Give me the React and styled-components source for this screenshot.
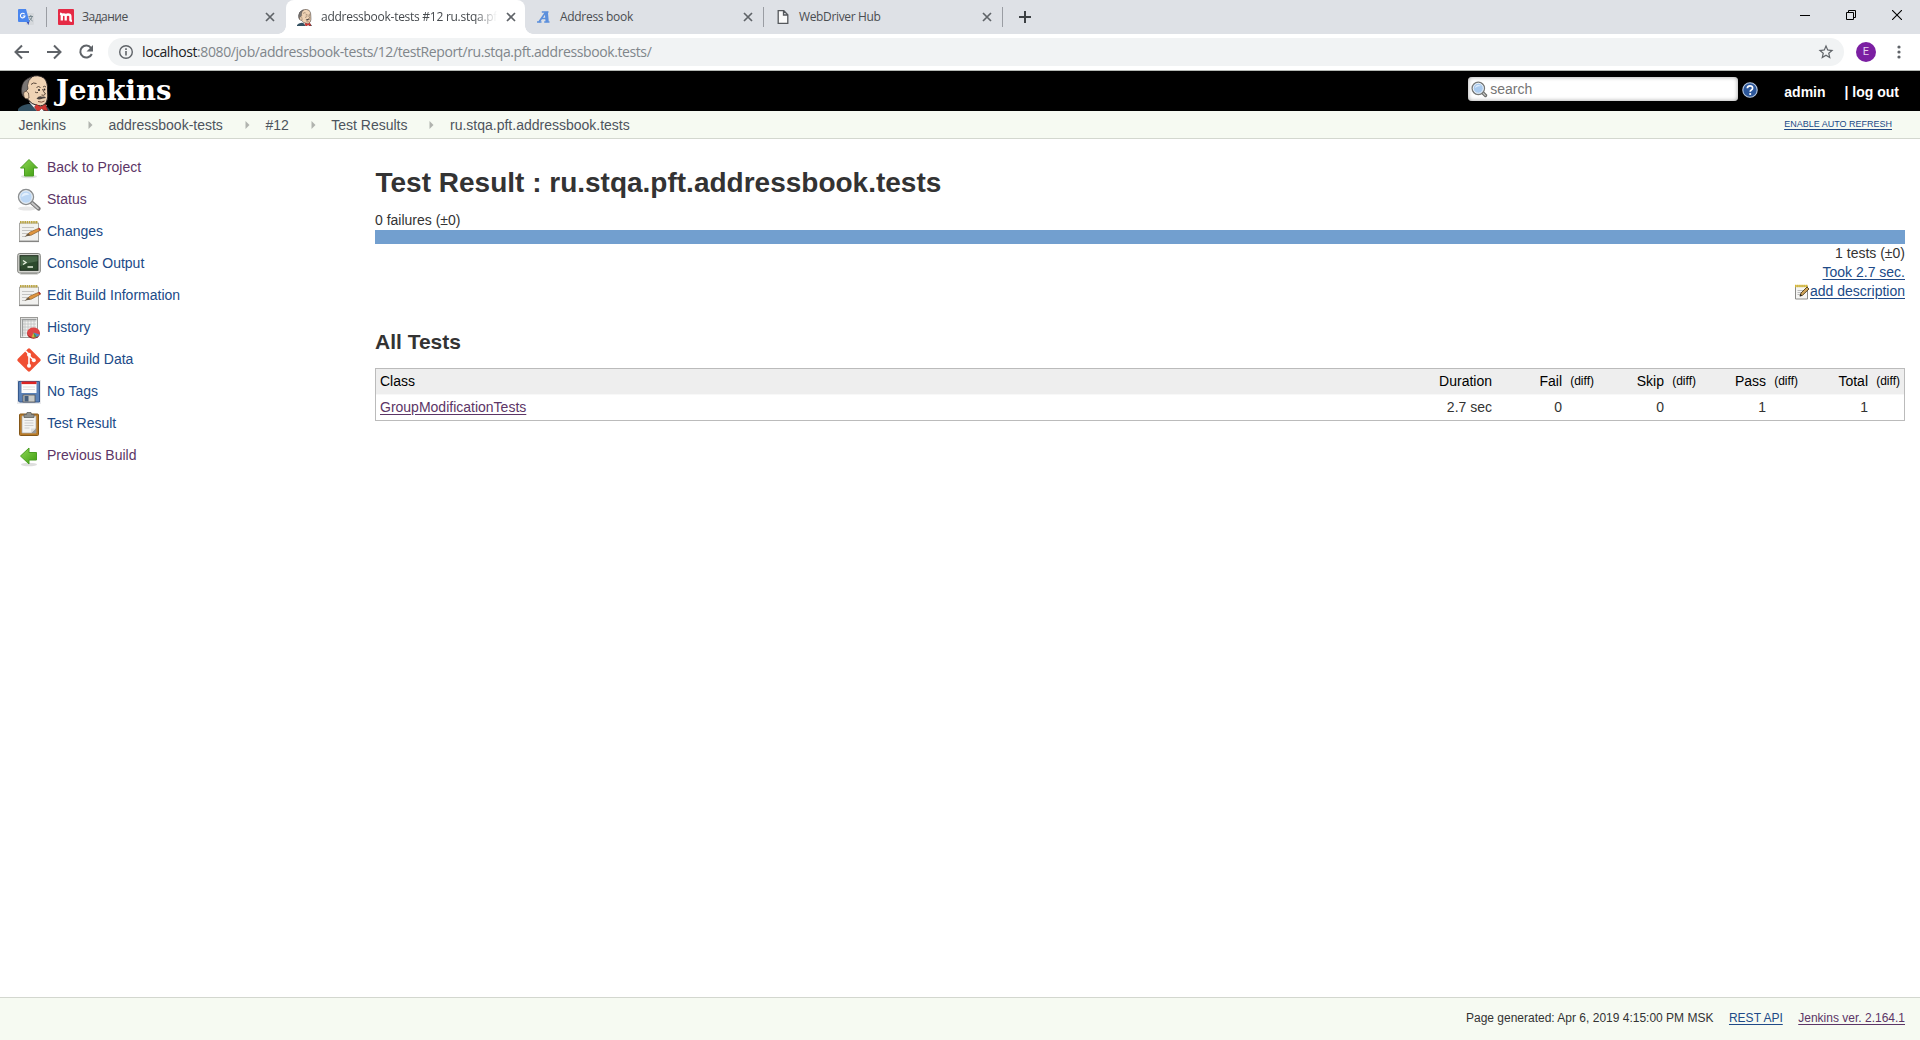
import React from 'react';
import styled, { createGlobalStyle, css } from 'styled-components';

const GlobalStyle = createGlobalStyle`
  * { box-sizing: border-box; }
  html, body { margin: 0; padding: 0; background: #fff; }
  body {
    font: 14px/19px "Liberation Sans", Arial, sans-serif;
    color: #333;
    overflow: hidden;
  }
  svg { display: block; flex: none; }
`;

const chromeFont = css`
  font-family: "Open Sans", "Noto Sans", sans-serif;
`;

const Page = styled.div`
  display: flex;
  flex-direction: column;
  width: 1920px;
  height: 1040px;
`;

/* ---------- browser window ---------- */

const TabStrip = styled.div`
  ${chromeFont}
  display: flex;
  height: 34px;
  flex: none;
  background: #dee1e6;
`;

const PinnedTab = styled.div`
  display: flex;
  align-items: center;
  width: 46px;
  padding-left: 18px;
`;

const Tab = styled.div`
  position: relative;
  display: flex;
  align-items: center;
  width: ${(p) => p.$width}px;
  padding: 0 10px 0 11px;
  background: ${(p) => (p.$active ? '#fff' : 'transparent')};
  border-radius: 8px 8px 0 0;
  color: ${(p) => (p.$active ? '#45494d' : '#4a4d51')};
  ${(p) =>
    p.$active &&
    css`
      &::before,
      &::after {
        content: '';
        position: absolute;
        bottom: 0;
        width: 8px;
        height: 8px;
      }
      &::before {
        left: -8px;
        background: radial-gradient(circle at 0 0, transparent 7.5px, #fff 8px);
      }
      &::after {
        right: -8px;
        background: radial-gradient(circle at 100% 0, transparent 7.5px, #fff 8px);
      }
    `}
`;

const TabTitle = styled.div`
  flex: 1;
  margin: 0 8px;
  white-space: nowrap;
  font-size: 12px;
  line-height: 18px;
  letter-spacing: ${(p) => p.$spacing || 0}px;
  ${(p) => p.$fade && css`
    margin: 0 8px 0 9px;
    mask-image: linear-gradient(90deg, #000 87%, transparent);
  `}
`;

const TabDivider = styled.div`
  width: 1px;
  height: 20px;
  margin: 7px 0 0 ${(p) => (p.$flush ? 0 : -1)}px;
  background: #9a9da3;
`;

const NewTab = styled.div`
  display: flex;
  align-items: center;
  padding-left: 16px;
`;

const WindowButtons = styled.div`
  display: flex;
  width: 138px;
  height: 29px;
  margin-left: auto;
`;

const WindowButton = styled.div`
  display: flex;
  align-items: center;
  justify-content: center;
  width: 46px;
`;

const Toolbar = styled.div`
  ${chromeFont}
  display: flex;
  align-items: center;
  height: 37px;
  flex: none;
  padding: 0 13px 1px 12px;
  border-bottom: 1px solid #b4b8b3;
  background: #fff;
`;

const NavButtons = styled.div`
  display: flex;
  gap: 12px;
  width: 96px;
`;

const Omnibox = styled.div`
  display: flex;
  align-items: center;
  flex: 1;
  height: 28px;
  padding: 0 9px 0 10px;
  border-radius: 14px;
  background: #f1f3f4;
`;

const Url = styled.div`
  flex: 1;
  margin-left: 8px;
  font-size: 14px;
  line-height: 20px;
  letter-spacing: -0.4px;
  color: #80868b;
  white-space: nowrap;
  b { font-weight: 400; color: #202124; }
`;

const Avatar = styled.div`
  width: 20px;
  height: 20px;
  margin: 0 15px 0 12px;
  border-radius: 50%;
  background: #7b1fa2;
  color: #e7d3ee;
  font: 11px/20px Roboto, sans-serif;
  text-align: center;
`;

/* ---------- Jenkins ---------- */

const Header = styled.header`
  display: flex;
  height: 40px;
  flex: none;
  padding: 0 21px 0 18px;
  background: #000;
  color: #fff;
`;

const Logo = styled.div`
  display: flex;
  align-items: flex-end;
  gap: 6px;
`;

const LogoText = styled.div`
  height: 40px;
  font: bold 27.5px/38px "DejaVu Serif", serif;
`;

const SearchBox = styled.div`
  display: flex;
  align-items: center;
  gap: 2px;
  width: 270px;
  height: 24px;
  margin: 6px 4px 0 auto;
  padding-left: 3px;
  border-radius: 4px;
  background: #fff;
  box-shadow: inset 0 0 4px #999;
  color: #757575;
`;

const HelpIcon = styled.div`
  width: 16px;
  margin: 11px 26px 0 0;
`;

const UserLink = styled.div`
  margin-left: ${(p) => p.$gap || 0}px;
  line-height: 43px;
  font-weight: bold;
  white-space: pre;
`;

const BreadcrumbBar = styled.nav`
  display: flex;
  align-items: center;
  height: 28px;
  flex: none;
  padding: 1px 28px 0 18.5px;
  border-bottom: 1px solid #d3d7cf;
  background: #f6faf2;
  color: #4d545d;
`;

const CrumbArrow = styled.div`
  width: 42.5px;
  display: flex;
  padding-left: 22px;
`;

const AutoRefresh = styled.a`
  margin: -2px 0 0 auto;
  font-size: 9px;
  line-height: 12px;
  color: #204a87;
  text-decoration: underline;
  text-underline-offset: 1.5px;
`;

const Body = styled.div`
  display: flex;
  flex: 1;
`;

const SidePanel = styled.aside`
  width: 375px;
  padding: 12px 0 0 17px;
`;

const Task = styled.a`
  display: flex;
  align-items: center;
  gap: 6px;
  height: 32px;
  color: ${(p) => (p.$visited ? '#5c3566' : '#204a87')};
  svg { margin-top: 2px; }
`;

const MainPanel = styled.main`
  width: 1530px;
`;

const Title = styled.h1`
  margin: 27px 0 11px;
  font-size: 28px;
  line-height: 34px;
  text-indent: 0.5px;
`;

const Subtitle = styled.h2`
  margin: 29px 0 14px;
  font-size: 21px;
  line-height: 24px;
`;

const Failures = styled.div`
  height: 19px;
`;

const ResultBar = styled.div`
  height: 14px;
  background: #729fcf;
`;

const Summary = styled.div`
  display: flex;
  flex-direction: column;
  align-items: flex-end;
`;

const Link = styled.a`
  color: ${(p) => (p.$visited ? '#5c3566' : '#204a87')};
  text-decoration: underline;
  text-underline-offset: 2px;
`;

const Description = styled.div`
  display: flex;
  align-items: center;
`;

const Table = styled.div`
  display: flex;
  flex-direction: column;
  border: 1px solid #bbb;
`;

const Row = styled.div`
  display: grid;
  grid-template-columns: 1fr 90px repeat(4, 102px);
  height: ${(p) => (p.$head ? 26 : 25)}px;
  line-height: 25px;
  background: ${(p) => (p.$head ? '#eee' : '#fff')};
  color: ${(p) => (p.$head ? '#000' : '#333')};
  border-bottom: ${(p) => (p.$head ? '1px solid #f8f8f8' : '0')};
`;

const ClassCell = styled.div`
  padding-left: 4px;
`;

const DurationCell = styled.div`
  padding-right: 4px;
  text-align: right;
`;

const CountCell = styled.div`
  display: grid;
  grid-template-columns: 1fr 36px;
  text-align: right;
`;

const Diff = styled.span`
  padding-right: 4px;
  font-size: 12px;
`;

const Footer = styled.footer`
  display: flex;
  justify-content: flex-end;
  gap: 15.5px;
  height: 43px;
  flex: none;
  padding: 11px 15px 0;
  border-top: 1px solid #d3d7cf;
  background: #f6faf2;
  font-size: 12px;
  line-height: 18px;
`;

/* ---------- drawings ---------- */

const Stroke = ({ size = 16, d, w = 2, color = '#5f6368', box = 16 }) => (
  <svg width={size} height={size} viewBox={`0 0 ${box} ${box}`} fill="none" stroke={color} strokeWidth={w}>
    <path d={d} />
  </svg>
);

const TabClose = () => <Stroke size={12} box={12} w={1.7} d="M2 2l8 8M10 2l-8 8" />;

const TranslateIcon = () => (
  <svg width="16" height="16" viewBox="0 0 16 16">
    <path d="M6 4h9a1 1 0 011 1v10a1 1 0 01-1 1H8z" fill="#d5d8dc" />
    <path d="M8 12l2.500 4 1-4z" fill="#3a4fb5" />
    <path d="M1 0h7l3.500 13H1a1 1 0 01-1-1V1a1 1 0 011-1z" fill="#4a86ee" />
    <path d="M6.600 5.200A2.300 2.300 0 107 7H4.800" fill="none" stroke="#fff" strokeWidth="1.100" />
    <path d="M10.500 7.500H15M12.800 6v1.500M11 12c1.500-1 2.700-2.500 3-4.500M11.600 8.500c.5 1.500 1.500 2.500 3 3.500" fill="none" stroke="#7a8a91" strokeWidth="1" />
  </svg>
);

const MIcon = () => (
  <svg width="16" height="16" viewBox="0 0 16 16">
    <rect width="16" height="16" rx="1" fill="#e52a45" />
    <path d="M2 4.600q1.800.2 1.800 2.400v4.500M3.800 7.500q.2-2 2-2 1.900 0 1.900 2v4M7.700 7.500q.2-2 2.300-2 2.400 0 2.400 2v4q0 .3 1.600.3" fill="none" stroke="#fff" strokeWidth="2.300" />
  </svg>
);

const AIcon = () => (
  <svg width="16" height="16" viewBox="0 0 16 16" fill="none" stroke="#5b8fdc">
    <path d="M3 13L9.500 3.500" strokeWidth="1.700" />
    <path d="M10.300 3L11.200 13" strokeWidth="3.200" />
    <path d="M1 13h4.500M8.200 13h5.300M5.800 3h6.700M6 9.500h4" strokeWidth="1.600" />
  </svg>
);

const PageIcon = () => (
  <svg width="16" height="16" viewBox="0 0 16 16" fill="#fafafa" stroke="#55585c" strokeWidth="1.300">
    <path d="M3.200 1.700h5.600l4 4v8.600H3.200zM8.500 2v4h4" />
  </svg>
);

const Butler = ({ width, height }) => (
  <svg width={width} height={height} viewBox="0 0 32 36" preserveAspectRatio="none">
    <path d="M0 36V34q3-4 10-5l15 1q6 2 7 6z" fill="#335061" />
    <path d="M11 27l8 9h6l4-6z" fill="#f4f4f4" />
    <path d="M4 13Q5 5 13 2 20-1 26 3q4 4 3.500 12 1 8-1 12-3 5-9 3.500-6-1-9.500-6Q3 23 4 13z" fill="#efd3b4" stroke="#231f20" strokeWidth="1" />
    <path d="M3.500 14Q4 6 10 3.500 12 2 14 2 10 5 9.500 10.500L10 14 8 16 6 22Q3 20 3.500 14z" fill="#797573" stroke="#231f20" strokeWidth=".6" />
    <path d="M6 17q2.500-2 4.500 1l.5 5q-4 2-5-1.500-.8-2.500 0-4.500z" fill="#efd3b4" stroke="#4d3b2e" strokeWidth=".7" />
    <path d="M13 9.500Q15 7 18.500 8.500M18.500 12.500q2-2 4 0M25 12q1.500-1.500 3 0M24.500 14q1 3 3 5-1.500 2-4 1M17 17q1.500 1 3 .5" fill="none" stroke="#4a382c" strokeWidth=".9" />
    <circle cx="21" cy="15" r="1" fill="#231f20" />
    <circle cx="26.500" cy="14.500" r=".9" fill="#231f20" />
    <path d="M18.500 23.500q3-3.500 5.500-1.800 3-.7 4 1.300-4 .6-4.500 1-3 1-5-.5z" fill="#4c433f" />
    <path d="M20 26.500q4 1.500 6.500-.5" fill="none" stroke="#7d4c3a" strokeWidth="1" />
    <path d="M19 36l-2.500-4 2-2.500 4.500 2.300 4.500-2.600L30 36l-4.500-1-2-1.500L21 36z" fill="#d33833" stroke="#731d18" strokeWidth=".5" />
  </svg>
);

const Magnifier = ({ size }) => (
  <svg width={size} height={size} viewBox="0 0 24 24">
    <ellipse cx="10" cy="20.500" rx="9" ry="2" fill="#e6e6e6" />
    <path d="M14 14l7.500 6.500" stroke="#777" strokeWidth="4.200" strokeLinecap="round" />
    <path d="M15 15l6 5.300" stroke="#c8c8c8" strokeWidth="1.800" strokeLinecap="round" />
    <circle cx="9" cy="9" r="7.300" fill="#bcd7f5" stroke="#8c8f91" strokeWidth="1.800" />
    <circle cx="9" cy="9" r="6.300" fill="none" stroke="#f3f6f8" strokeWidth="1" />
    <path d="M4.500 9a4.500 4.500 0 018-2.500q-4 0-8 2.500z" fill="#e3effc" />
  </svg>
);

const SearchIcon = () => (
  <svg width="17" height="17" viewBox="0 0 17 17">
    <path d="M11.500 11.500l3 3" stroke="#6d6e6c" strokeWidth="3.400" strokeLinecap="round" />
    <path d="M12 12l2.300 2.300" stroke="#c9cac8" strokeWidth="1.200" strokeLinecap="round" />
    <circle cx="7.300" cy="7.300" r="6.200" fill="#a9caee" stroke="#777876" strokeWidth="1.300" />
    <circle cx="7.300" cy="7.300" r="5" fill="none" stroke="#eef2f5" strokeWidth="1" />
    <path d="M4 7a3.500 3.500 0 016-2q-3.500 0-6 2z" fill="#dcebfb" />
  </svg>
);

const ArrowIcon = ({ left }) => (
  <svg width="24" height="24" viewBox="0 0 24 24">
    <defs>
      <linearGradient id="leaf" x1="0" y1="0" x2="1" y2="1">
        <stop offset="0" stopColor="#8fd956" />
        <stop offset="1" stopColor="#3f9c10" />
      </linearGradient>
    </defs>
    <ellipse cx="12" cy="20.500" rx="8" ry="1.800" fill="#dedede" />
    <path
      d={left ? 'M3.500 12L12 4v4.500h7.500v7.500H12V20z' : 'M12 3.500L20.500 12H16.500v8h-9v-8H3.500z'}
      fill="url(#leaf)"
      stroke="#4a9e22"
      strokeWidth="1"
      strokeLinejoin="round"
    />
  </svg>
);

const Notepad = ({ size = 24 }) => (
  <svg width={size} height={size} viewBox="0 0 24 24">
    <path d="M2.500 3h19v18h-19z" fill="#f1f1ef" stroke="#a8a8a5" />
    <path d="M2 21.500h20" stroke="#858583" strokeWidth="1.200" />
    <path d="M3 2.300h18" stroke="#bba544" strokeWidth="2.600" strokeDasharray="1.600 .6" />
    <path d="M5 7.500h12M5 10.500h10M5 13.500h6M5 16.500h4" stroke="#c4c4c2" />
    <path d="M9.500 15l4-3.200L22 8.200l1.500 2L14 15.300z" fill="#e0953f" stroke="#8a5f2a" strokeWidth=".7" />
    <path d="M7.500 16.700l4.200-3.400 1.500 2.200z" fill="#6a5a45" />
    <path d="M21.800 8.300l1.500 1.900" stroke="#b3323a" strokeWidth="1.500" />
  </svg>
);

const SmallNotepad = () => (
  <svg width="16" height="16" viewBox="0 0 16 16">
    <path d="M1.500 2h12v13h-12z" fill="#f5f5f3" stroke="#8b8b88" />
    <path d="M1 2h13" stroke="#dab92a" strokeWidth="2.500" strokeDasharray="1.500 .6" />
    <path d="M3.500 6.500h7M3.500 8.500h5M3.500 10.500h3" stroke="#bbb" />
    <path d="M6 12l1-3 6-6 2 2-6.500 6.300z" fill="#cfa45a" stroke="#4f3c1b" strokeWidth=".9" />
    <path d="M5.600 12.500l1-2.500 1.500 1.500z" fill="#222" />
  </svg>
);

const Terminal = () => (
  <svg width="24" height="24" viewBox="0 0 24 24">
    <path d="M5 20h14l2 2.500H3z" fill="#b4b5b0" />
    <rect x=".7" y="1.500" width="22.600" height="19.500" rx="2" fill="#d5d6d1" stroke="#7f807c" />
    <rect x="3" y="3.700" width="18" height="14.600" fill="#2c4a2c" stroke="#1d2b1d" />
    <path d="M3.500 4.200h17v5q-9 1-17 5z" fill="#466646" />
    <path d="M6 8.500l3 2-3 2M10.500 15h5.500" fill="none" stroke="#e8f2e0" strokeWidth="1.300" />
  </svg>
);

const HistoryIcon = () => (
  <svg width="24" height="24" viewBox="0 0 24 24">
    <rect x="3.500" y="1.500" width="17" height="20" fill="#f2f2f0" stroke="#9b9b98" />
    <path d="M5 5h14M5 8h14M5 11h14M5 14h14M5 17h14M8 3v17M11 3v17M14 3v17M17 3v17" stroke="#bfc1c1" strokeWidth=".8" />
    <path d="M5.500 3.500v17M4.500 3.500h15" stroke="#9a9d9d" strokeWidth="1.400" />
    <ellipse cx="16.500" cy="17.700" rx="6.300" ry="5" fill="#a01b1b" />
    <ellipse cx="16.500" cy="16.500" rx="6.300" ry="5" fill="#df4545" />
    <path d="M16.500 16.500l-2 5h4z" fill="#ccb13c" />
    <path d="M16.500 16.500l1.500 5q4-1 4.500-3z" fill="#538bc5" />
    <path d="M16.500 16.500l1 5 2-1z" fill="#579431" />
  </svg>
);

const GitIcon = () => (
  <svg width="24" height="24" viewBox="0 0 24 24">
    <path d="M10.700.9Q12-.3 13.300.9l9.800 9.800q1.200 1.300 0 2.600l-9.800 9.800q-1.300 1.200-2.600 0L.9 13.300q-1.200-1.300 0-2.600z" fill="#f05033" />
    <path d="M8.500 2.800l3.500 3.500v12M12 7.500l4.500 4.500" fill="none" stroke="#fff" strokeWidth="1.600" />
    <circle cx="12" cy="6.800" r="2" fill="#fff" />
    <circle cx="12" cy="17.800" r="2" fill="#fff" />
    <circle cx="16.800" cy="12.200" r="2" fill="#fff" />
  </svg>
);

const Floppy = () => (
  <svg width="24" height="24" viewBox="0 0 24 24">
    <rect width="24" height="24" fill="#e9eaec" />
    <path d="M1.500 1.500h21v20.500h-20l-1-1z" fill="#5b82b8" stroke="#36588c" />
    <rect x="4.500" y="2" width="15" height="11" fill="#fcfcfc" />
    <rect x="4.500" y="1.500" width="15" height="2.600" fill="#dd2525" />
    <path d="M6 7h12M6 9.500h12" stroke="#d5d5d5" strokeWidth=".8" />
    <rect x="6" y="15" width="12" height="7" fill="#c8cac7" stroke="#555" strokeWidth=".8" />
    <rect x="7.500" y="16" width="4" height="5.500" fill="#455e7d" />
  </svg>
);

const Clipboard = () => (
  <svg width="24" height="24" viewBox="0 0 24 24">
    <rect x="2.500" y="2" width="19" height="21.500" rx="1" fill="#b87b28" stroke="#855718" />
    <path d="M5 4h14v17H5z" fill="#f3f3f1" stroke="#aaa" strokeWidth=".7" />
    <path d="M14 21l5-5v5z" fill="#999" />
    <path d="M14 21v-4.500h5z" fill="#dcdcda" />
    <path d="M7.500 8.500h9M7.500 11h9M7.500 13.500h9M7.500 16h5" stroke="#cdcdcd" />
    <path d="M7 2.500h2.500L10 .5h4l.5 2H17V5.500H7z" fill="#90918d" stroke="#60615e" strokeWidth=".8" />
  </svg>
);

const TASKS = [
  ['Back to Project', <ArrowIcon />, true],
  ['Status', <Magnifier size={24} />, true],
  ['Changes', <Notepad />],
  ['Console Output', <Terminal />],
  ['Edit Build Information', <Notepad />],
  ['History', <HistoryIcon />],
  ['Git Build Data', <GitIcon />],
  ['No Tags', <Floppy />],
  ['Test Result', <Clipboard />],
  ['Previous Build', <ArrowIcon left />, true],
];

const CRUMBS = ['Jenkins', 'addressbook-tests', '#12', 'Test Results', 'ru.stqa.pft.addressbook.tests'];

const COUNTS = [
  ['Fail', 0],
  ['Skip', 0],
  ['Pass', 1],
  ['Total', 1],
];

const BrowserTabs = () => (
  <TabStrip>
    <PinnedTab><TranslateIcon /></PinnedTab>
    <TabDivider $flush />
    <Tab $width={239}>
      <MIcon />
      <TabTitle $spacing={-0.5}>Задание</TabTitle>
      <TabClose />
    </Tab>
    <Tab $width={239} $active>
      <Butler width={15} height={17} />
      <TabTitle $fade $spacing={-0.27}>addressbook-tests #12 ru.stqa.pf</TabTitle>
      <TabClose />
    </Tab>
    <Tab $width={239}>
      <AIcon />
      <TabTitle $spacing={-0.3}>Address book</TabTitle>
      <TabClose />
    </Tab>
    <TabDivider />
    <Tab $width={239}>
      <PageIcon />
      <TabTitle $spacing={-0.35}>WebDriver Hub</TabTitle>
      <TabClose />
    </Tab>
    <TabDivider />
    <NewTab><Stroke size={12} box={12} color="#3c4043" d="M6 0v12M0 6h12" /></NewTab>
    <WindowButtons>
      <WindowButton><Stroke size={10} box={10} w={1} color="#000" d="M0 5.500h10" /></WindowButton>
      <WindowButton><Stroke size={10} box={10} w={1} color="#000" d="M.5 2.500h7v7h-7zM2.500 2.500v-2h7v7h-2" /></WindowButton>
      <WindowButton><Stroke size={10} box={10} w={1.100} color="#000" d="M0 0l10 10M10 0L0 10" /></WindowButton>
    </WindowButtons>
  </TabStrip>
);

const AddressBar = () => (
  <Toolbar>
    <NavButtons>
      <Stroke size={20} box={20} d="M17 10H4M10 3.500L3.500 10l6.500 6.500" />
      <Stroke size={20} box={20} d="M3 10h13M10 3.500l6.500 6.500-6.500 6.500" />
      <svg width="20" height="20" viewBox="0 0 20 20">
        <path d="M15 5.800A6 6 0 1015.800 12" fill="none" stroke="#5f6368" strokeWidth="2" />
        <path d="M17 3v6.500h-6.500z" fill="#5f6368" />
      </svg>
    </NavButtons>
    <Omnibox>
      <svg width="16" height="16" viewBox="0 0 16 16">
        <circle cx="8" cy="8" r="6.300" fill="none" stroke="#5f6368" strokeWidth="1.400" />
        <path d="M8 7v4.500M8 4.300v1.600" stroke="#5f6368" strokeWidth="1.600" />
      </svg>
      <Url><b>localhost</b>:8080/job/addressbook-tests/12/testReport/ru.stqa.pft.addressbook.tests/</Url>
      <svg width="18" height="18" viewBox="0 0 24 24" fill="#5f6368">
        <path d="M22 9.240l-7.190-.62L12 2 9.190 8.630 2 9.240l5.460 4.730L5.820 21 12 17.270 18.180 21l-1.630-7.030L22 9.240zM12 15.400l-3.760 2.270 1-4.280-3.320-2.880 4.380-.38L12 6.100l1.710 4.040 4.380.38-3.320 2.880 1 4.280L12 15.400z" />
      </svg>
    </Omnibox>
    <Avatar>E</Avatar>
    <svg width="16" height="16" viewBox="0 0 16 16" fill="#5f6368">
      <circle cx="8" cy="3" r="1.600" /><circle cx="8" cy="8" r="1.600" /><circle cx="8" cy="13" r="1.600" />
    </svg>
  </Toolbar>
);

export default function App() {
  return (
    <Page>
      <GlobalStyle />
      <BrowserTabs />
      <AddressBar />
      <Header>
        <Logo>
          <Butler width={32} height={36} />
          <LogoText>Jenkins</LogoText>
        </Logo>
        <SearchBox><SearchIcon />search</SearchBox>
        <HelpIcon>
          <svg width="16" height="16" viewBox="0 0 16 16">
            <circle cx="8" cy="8" r="7.200" fill="#2c579b" stroke="#b6c8e2" strokeWidth="1.100" />
            <path d="M5.300 6.300q.2-2.500 2.700-2.500 2.600 0 2.600 2.200 0 1.200-1.200 1.900-1.200.6-1.200 1.800" fill="none" stroke="#fff" strokeWidth="1.700" />
            <circle cx="8.200" cy="12" r="1.100" fill="#fff" />
          </svg>
        </HelpIcon>
        <UserLink>admin</UserLink>
        <UserLink $gap={19}>| log out</UserLink>
      </Header>
      <BreadcrumbBar>
        {CRUMBS.map((name, i) => (
          <React.Fragment key={name}>
            {i > 0 && (
              <CrumbArrow>
                <svg width="5" height="8" viewBox="0 0 5 8"><path d="M.5 0l4 4-4 4z" fill="#b0b3ae" /></svg>
              </CrumbArrow>
            )}
            <span>{name}</span>
          </React.Fragment>
        ))}
        <AutoRefresh>ENABLE AUTO REFRESH</AutoRefresh>
      </BreadcrumbBar>
      <Body>
        <SidePanel>
          {TASKS.map(([name, icon, visited]) => (
            <Task key={name} $visited={visited}>{icon}{name}</Task>
          ))}
        </SidePanel>
        <MainPanel>
          <Title>Test Result : ru.stqa.pft.addressbook.tests</Title>
          <Failures>0 failures (±0)</Failures>
          <ResultBar />
          <Summary>
            <div>1 tests (±0)</div>
            <Link>Took 2.7 sec.</Link>
            <Description><SmallNotepad /><Link>add description</Link></Description>
          </Summary>
          <Subtitle>All Tests</Subtitle>
          <Table>
            <Row $head>
              <ClassCell>Class</ClassCell>
              <DurationCell>Duration</DurationCell>
              {COUNTS.map(([name]) => (
                <CountCell key={name}>{name}<Diff>(diff)</Diff></CountCell>
              ))}
            </Row>
            <Row>
              <ClassCell><Link $visited>GroupModificationTests</Link></ClassCell>
              <DurationCell>2.7 sec</DurationCell>
              {COUNTS.map(([name, value]) => (
                <CountCell key={name}>{value}</CountCell>
              ))}
            </Row>
          </Table>
        </MainPanel>
      </Body>
      <Footer>
        <span>Page generated: Apr 6, 2019 4:15:00 PM MSK</span>
        <Link>REST API</Link>
        <Link $visited>Jenkins ver. 2.164.1</Link>
      </Footer>
    </Page>
  );
}
